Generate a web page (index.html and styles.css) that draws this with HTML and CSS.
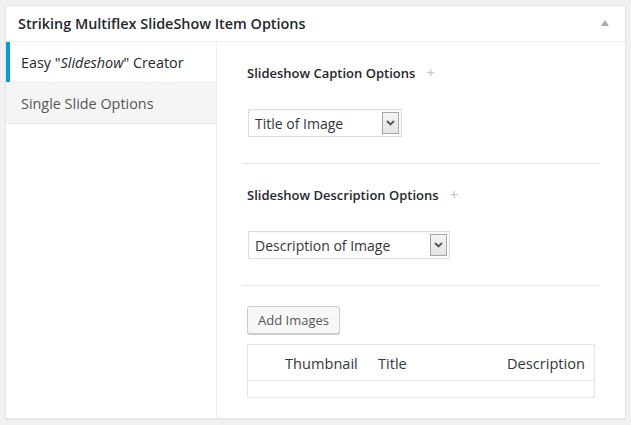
FILE: index.html
```html
<!DOCTYPE html>
<html>
<head>
<meta charset="utf-8">
<link rel="stylesheet" href="styles.css">
</head>
<body>
<div class="postbox">
  <div class="hndle">
    <h2 class="title">Striking Multiflex SlideShow Item Options</h2>
    <span class="toggle"></span>
  </div>
  <div class="inside">
    <ul class="tabs">
      <li class="tab active">Easy "<em>Slideshow</em>" Creator</li>
      <li class="tab">Single Slide Options</li>
    </ul>
    <div class="panel">
      <div class="section">
        <h3 class="label">Slideshow Caption Options <span class="plus">+</span></h3>
        <div class="select-wrap">
          <select class="select sel-caption"><option>Title of Image</option></select>
          <span class="arrow"><svg width="9" height="6" viewBox="0 0 9 6"><path d="M1 1 L4.5 4.5 L8 1" fill="none" stroke="#555" stroke-width="1.8"/></svg></span>
        </div>
      </div>
      <div class="section">
        <h3 class="label">Slideshow Description Options <span class="plus">+</span></h3>
        <div class="select-wrap">
          <select class="select sel-desc"><option>Description of Image</option></select>
          <span class="arrow"><svg width="9" height="6" viewBox="0 0 9 6"><path d="M1 1 L4.5 4.5 L8 1" fill="none" stroke="#555" stroke-width="1.8"/></svg></span>
        </div>
      </div>
      <div class="section last">
        <button class="button">Add Images</button>
        <table class="images">
          <thead>
            <tr>
              <th class="c-handle"></th>
              <th class="c-thumb">Thumbnail</th>
              <th class="c-title">Title</th>
              <th class="c-desc">Description</th>
            </tr>
          </thead>
          <tbody>
            <tr><td colspan="4" class="empty"></td></tr>
          </tbody>
        </table>
      </div>
    </div>
  </div>
</div>
</body>
</html>
```
FILE: styles.css
```css
html, body {
  margin: 0;
  padding: 0;
  background: #f1f1f1;
}
body {
  padding: 5px;
  font-family: "Open Sans", "Noto Sans", sans-serif;
  color: #23282d;
}
.postbox {
  width: 619px;
  height: 412px;
  background: #fff;
  border: 1px solid #e5e5e5;
  box-shadow: 0 1px 1px rgba(0,0,0,0.04);
  display: flex;
  flex-direction: column;
}
.hndle {
  height: 35px;
  border-bottom: 1px solid #eee;
  display: flex;
  align-items: center;
  justify-content: space-between;
  padding: 0 16px 0 12px;
}
.title {
  margin: 0;
  font-size: 14.4px;
  font-weight: 600;
  line-height: 20px;
  color: #23282d;
}
.toggle {
  width: 0;
  height: 0;
  border-left: 4px solid transparent;
  border-right: 4px solid transparent;
  border-bottom: 6px solid #aaa;
  margin-top: -1px;
}
.inside {
  flex: 1;
  display: flex;
}
.tabs {
  list-style: none;
  margin: 0;
  padding: 0;
  width: 210px;
  border-right: 1px solid #eee;
  background: #fff;
}
.tab {
  box-sizing: border-box;
  padding-left: 15px;
  display: flex;
  align-items: center;
  font-size: 14.4px;
  color: #555;
  background: #f5f5f5;
  border-top: 1px solid #eee;
  border-bottom: 1px solid #eee;
  height: 42px;
}
.tab em { font-style: italic; }
.tab.active {
  background: #fff;
  color: #23282d;
  border-top: 0;
  border-bottom: 0;
  border-left: 4px solid #00a0d2;
  padding-left: 11px;
  height: 40px;
}
.panel {
  flex: 1;
  padding: 0 25px;
}
.section {
  border-bottom: 1px solid #e5e5e5;
  padding: 22px 0 26px 0;
}
.section.last {
  border-bottom: 0;
  padding: 20px 0 0 5px;
}
.label {
  margin: 0 0 27px 5px;
  font-size: 13px;
  font-weight: 600;
  line-height: 18px;
  height: 18px;
  color: #23282d;
}
.plus {
  color: #c8c8c8;
  font-weight: 600;
  font-size: 14px;
  line-height: 0;
  margin-left: 8px;
}
.select-wrap {
  position: relative;
  display: inline-block;
  margin-left: 6px;
  vertical-align: top;
}
.select {
  -webkit-appearance: none;
  appearance: none;
  display: block;
  height: 28px;
  box-sizing: border-box;
  border: 1px solid #ddd;
  border-radius: 0;
  background: #fff;
  font-family: "Open Sans", "Noto Sans", sans-serif;
  font-size: 14px;
  color: #32373c;
  padding: 0 0 0 6px;
  margin: 0;
  box-shadow: inset 0 1px 2px rgba(0,0,0,0.04);
}
.sel-caption { width: 154px; }
.sel-desc { width: 202px; }
.arrow {
  position: absolute;
  right: 3px;
  top: 3px;
  width: 17px;
  height: 22px;
  box-sizing: border-box;
  border: 1px solid #a6a6a6;
  background: linear-gradient(#f4f4f4, #e4e4e4);
  display: flex;
  align-items: center;
  justify-content: center;
  pointer-events: none;
}
.button {
  display: block;
  height: 28px;
  padding: 0 10px;
  font-family: "Open Sans", "Noto Sans", sans-serif;
  font-size: 13px;
  color: #555;
  background: #f7f7f7;
  border: 1px solid #ccc;
  border-radius: 3px;
  box-shadow: 0 1px 0 #ccc;
  margin: 0 0 10px 0;
}
.images {
  width: 348px;
  border-collapse: collapse;
  table-layout: fixed;
  border: 1px solid #e5e5e5;
}
.images th {
  font-weight: 400;
  font-size: 14.6px;
  color: #32373c;
  text-align: left;
  padding: 0 10px;
  height: 35px;
  border-bottom: 1px solid #e5e5e5;
}
.c-handle { width: 7px; }
.c-thumb { width: 73px; }
.c-title { width: 109px; }
.c-desc { width: 77px; }
.empty { height: 16px; padding: 0; }
```
